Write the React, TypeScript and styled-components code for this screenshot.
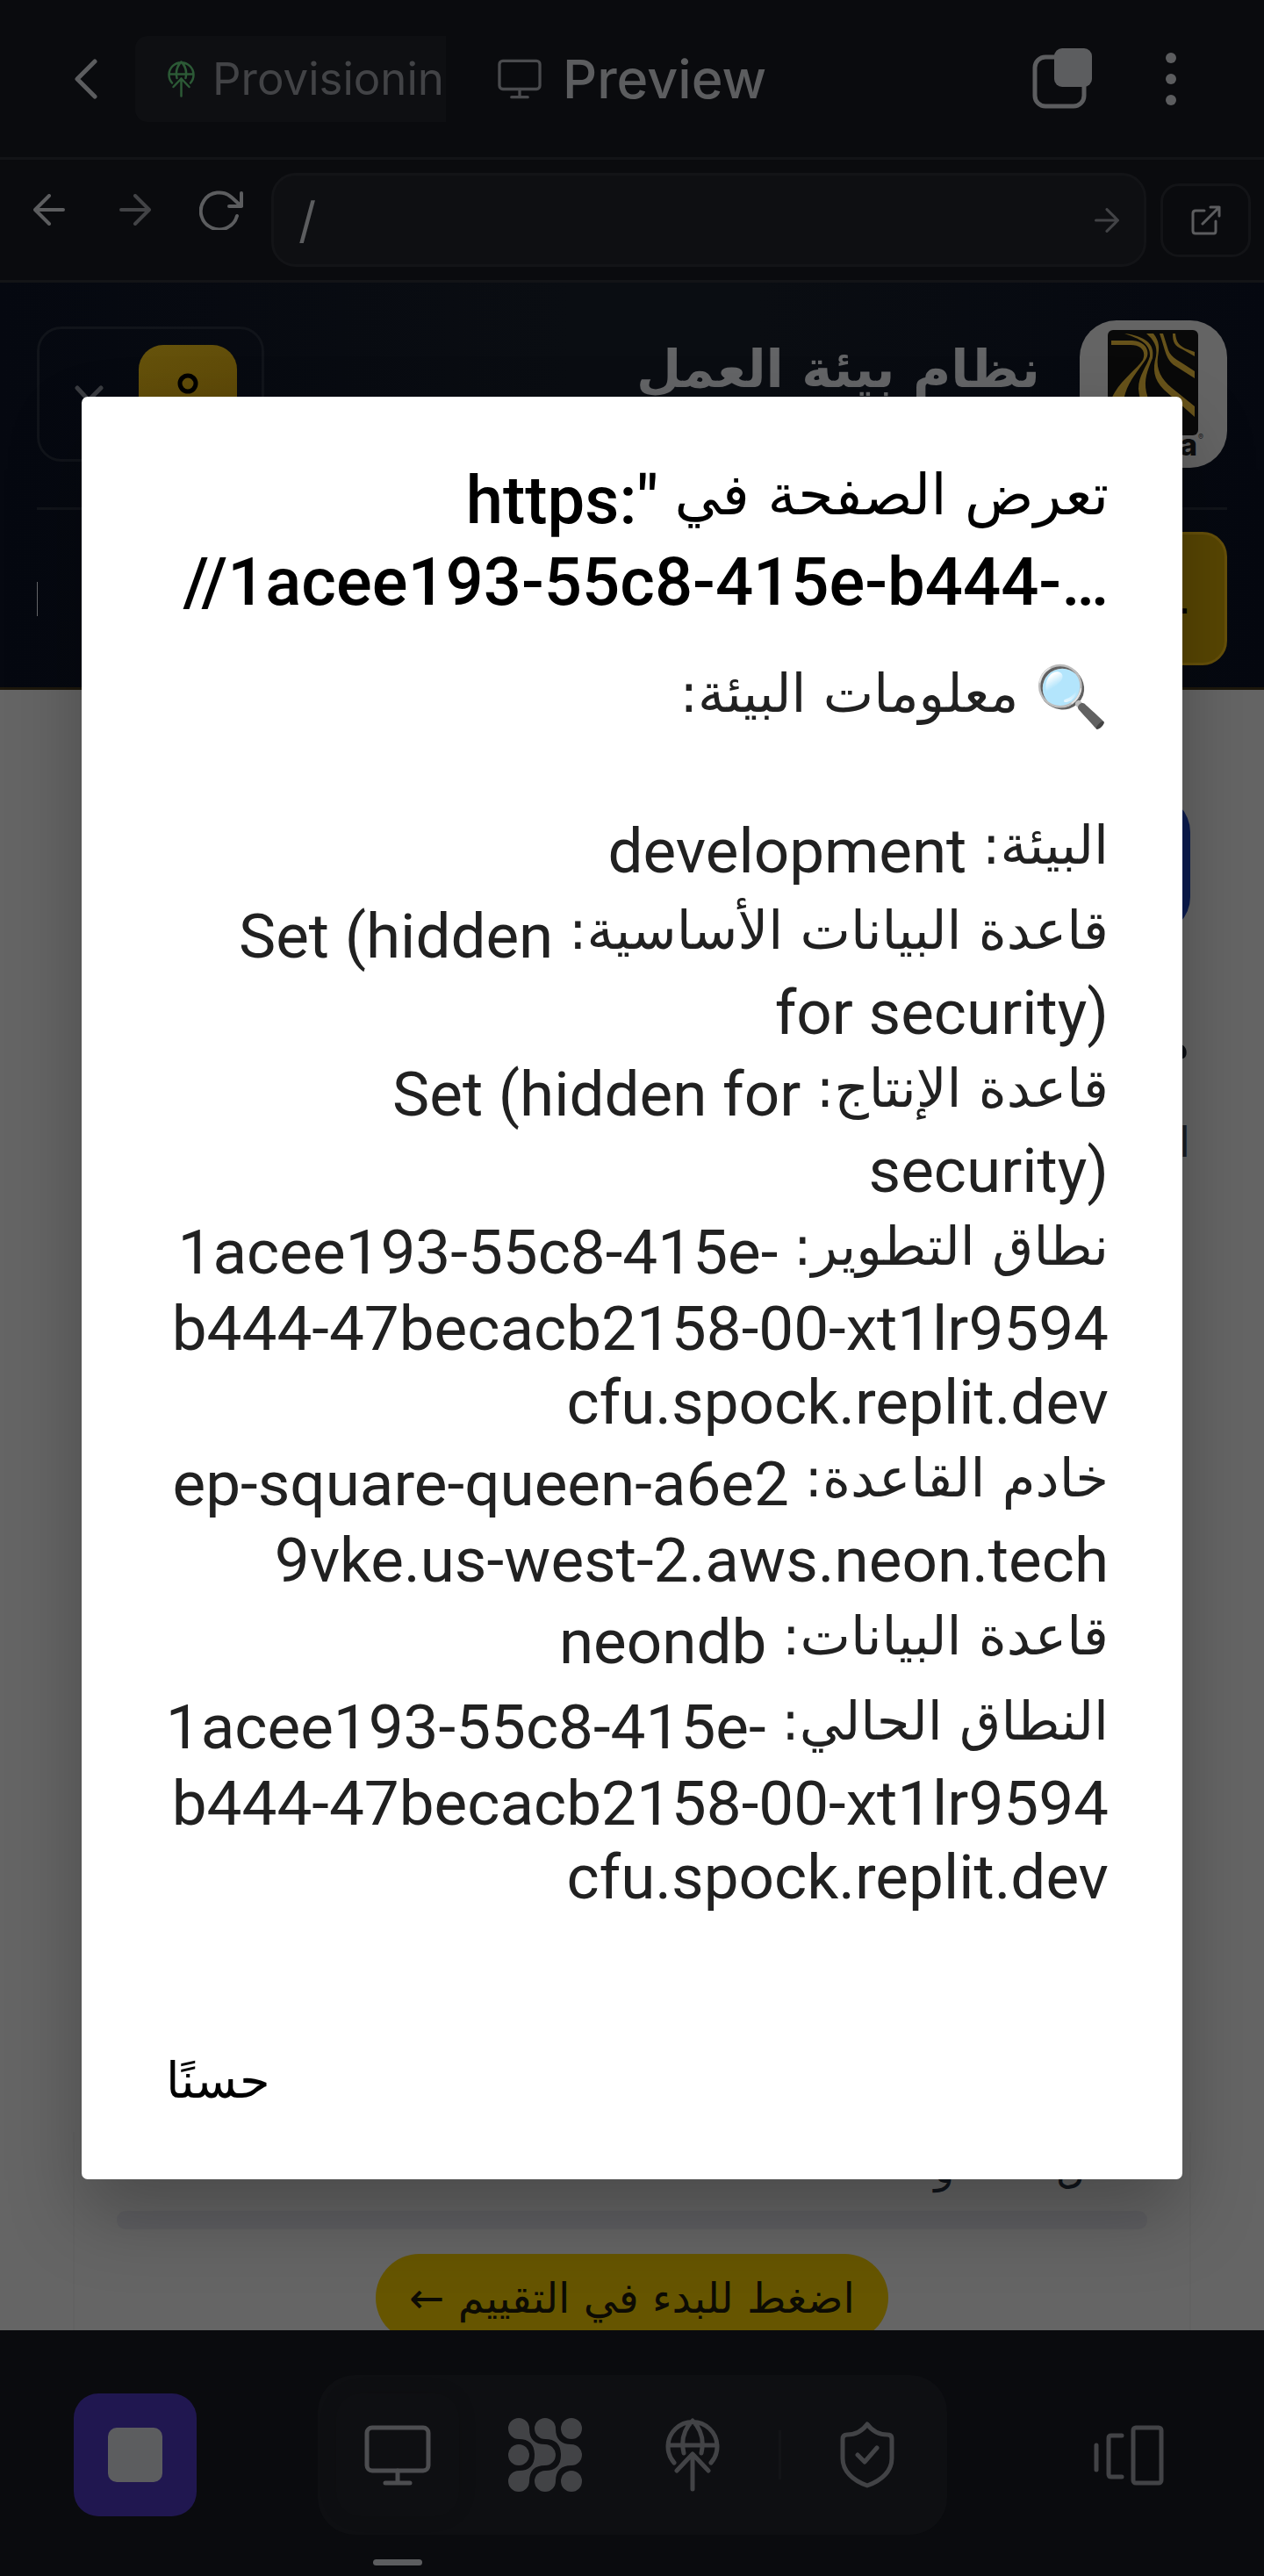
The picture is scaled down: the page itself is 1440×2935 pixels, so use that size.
import React from 'react';
import styled, { createGlobalStyle } from 'styled-components';

const color = {
  chrome: '#0a0b0e',
  raised: '#0e0f12',
  line: '#131417',
  text: '#5c5d5f',
  muted: '#424346',
};

const uiFont = "Inter, 'DejaVu Sans', sans-serif";
const arabicFont = "'DejaVu Sans', sans-serif";

const GlobalStyle = createGlobalStyle`
  *, *::before, *::after { box-sizing: border-box; }
  body { margin: 0; background: ${color.chrome}; font-family: ${uiFont}; }
  button, input { font: inherit; color: inherit; background: none; border: 0; padding: 0; margin: 0; }
  button { cursor: pointer; }
  svg { display: block; flex: none; }
`;

const Page = styled.div`
  display: flex;
  flex-direction: column;
  height: 100vh;
  min-height: 2400px;
  overflow: hidden;
  color: ${color.text};
`;

/* ---------- top bar ---------- */

const TopBar = styled.header`
  display: flex;
  align-items: center;
  flex: none;
  height: 182px;
  padding: 0 50px 0 70px;
  border-bottom: 3px solid ${color.line};
`;

const IconButton = styled.button<{ $width: number; $muted?: boolean }>`
  display: flex;
  align-items: center;
  justify-content: center;
  flex: none;
  width: ${(p) => p.$width}px;
  height: 84px;
  color: ${(p) => (p.$muted ? color.muted : color.text)};
`;

const Tabs = styled.nav`
  display: flex;
  align-items: center;
  flex: 1;
  gap: 59px;
  min-width: 0;
  margin-left: 28px;
`;

const BackgroundTab = styled.button`
  display: flex;
  align-items: center;
  flex: none;
  gap: 20px;
  width: 354px;
  height: 98px;
  padding-left: 37px;
  border-radius: 14px 0 0 14px;
  background: ${color.raised};
  color: ${color.muted};
  font-size: 51px;
  white-space: nowrap;

  svg { color: #2c5a36; }
`;

const CurrentTab = styled.button`
  display: flex;
  align-items: center;
  gap: 24px;
  font-size: 61px;
  font-weight: 500;

  svg { color: #4a4b4e; }
`;

const BarActions = styled.div`
  display: flex;
  gap: 12px;
`;

/* ---------- address bar ---------- */

const AddressBar = styled.div`
  display: flex;
  flex: none;
  height: 140px;
  padding: 15px 15px 0 7px;
  border-bottom: 3px solid ${color.line};
`;

const AddressForm = styled.form`
  display: flex;
  align-items: center;
  flex: 1;
  min-width: 0;
  height: 107px;
  margin: 0 16px 0 8px;
  padding: 0 28px;
  border: 3px solid ${color.line};
  border-radius: 28px;
  background: ${color.raised};
`;

const AddressInput = styled.input`
  flex: 1;
  min-width: 0;
  font-size: 56px;
  outline: none;
`;

const OpenButton = styled(IconButton)`
  align-self: flex-start;
  margin-top: 12px;
  border: 3px solid ${color.line};
  border-radius: 21px;
`;

/* ---------- previewed site ---------- */

const Preview = styled.main`
  display: flex;
  flex-direction: column;
  flex: 1;
  min-height: 0;
  overflow: hidden;
  background: #656565;
  font-family: ${arabicFont};
`;

const SiteHeader = styled.header`
  flex: none;
  padding: 43px 42px 25px;
  border-bottom: 3px solid #1d180c;
  background: linear-gradient(90deg, #050810, #0a0d12 45%, #0a0d12 60%, #050810);
`;

const SiteRow = styled.div`
  display: flex;
  align-items: center;
  gap: 45px;
  height: 168px;
`;

const LogoTile = styled.div`
  flex: none;
  width: 168px;
  height: 168px;
  overflow: hidden;
  border-radius: 42px;
  background: #646464;
`;

const SiteTitle = styled.h1`
  flex: 1;
  align-self: flex-start;
  margin: 0;
  padding-top: 14px;
  color: #636466;
  font-size: 59px;
  line-height: 84px;
  white-space: nowrap;
`;

const Profile = styled.button`
  display: flex;
  align-items: center;
  justify-content: space-between;
  flex: none;
  width: 259px;
  height: 154px;
  padding: 0 28px 0 40px;
  border: 3px solid #11141a;
  border-radius: 28px;
  direction: ltr;
`;

const Avatar = styled.span`
  display: flex;
  align-items: center;
  justify-content: center;
  width: 112px;
  height: 112px;
  border-radius: 28px;
  background: linear-gradient(160deg, #66530b, #584206);
  color: #000;
`;

const SiteNav = styled.nav`
  display: flex;
  align-items: center;
  justify-content: space-between;
  margin-top: 45px;
  padding-top: 25px;
  border-top: 3px solid #11141a;
`;

const NavItem = styled.button`
  width: 336px;
  height: 152px;
  padding: 0 38px;
  border: 3px solid #66500a;
  border-radius: 28px;
  background: #584603;
  color: #000;
  font-size: 47px;
  text-align: right;
`;

const NavEdge = styled.span`
  width: 1px;
  height: 39px;
  background: #66676a;
`;

const Section = styled.section`
  display: flex;
  flex-direction: column;
  align-items: flex-start;
  margin: 120px 84px 0;
  color: #0b0e13;
`;

const SectionBadge = styled.div`
  width: 158px;
  height: 158px;
  border-radius: 42px;
  background: #0c1c50;
`;

const SectionTitle = styled.h2`
  margin: 84px 0 0;
  font-size: 59px;
  line-height: 84px;
`;

const SectionText = styled.p`
  margin: 28px 0 0;
  color: #1a1e25;
  font-size: 47px;
  line-height: 84px;
`;

const Card = styled.article`
  display: flex;
  flex-direction: column;
  align-items: center;
  margin: auto 83px -13px;
  padding: 0 48px;
  border: solid #626262;
  border-width: 0 2px;
`;

const CardLine = styled.p`
  display: flex;
  align-self: stretch;
  gap: 116px;
  margin: 0;
  padding: 0 70px 6px;
  color: #11151b;
  font-size: 47px;
  line-height: 84px;
`;

const Progress = styled.div`
  align-self: stretch;
  height: 21px;
  border-radius: 10px;
  background: #5f5f62;
`;

const StartButton = styled.button`
  height: 100px;
  margin-top: 28px;
  padding: 0 38px;
  border-radius: 50px;
  background: #665500;
  color: #0c0b04;
  font-size: 48px;
  white-space: nowrap;
`;

/* ---------- bottom dock ---------- */

const Dock = styled.footer`
  display: flex;
  align-items: center;
  justify-content: space-between;
  flex: none;
  height: 280px;
  padding: 4px 84px 0;
  background: ${color.chrome};
`;

const StopButton = styled.button`
  display: flex;
  align-items: center;
  justify-content: center;
  width: 140px;
  height: 140px;
  border-radius: 28px;
  background: #201750;
`;

const StopMark = styled.span`
  width: 62px;
  height: 62px;
  border-radius: 10px;
  background: ${color.text};
`;

const DockGroup = styled.nav`
  display: flex;
  align-items: center;
  gap: 28px;
  padding: 21px;
  border-radius: 42px;
  background: ${color.raised};
`;

const DockButton = styled.button<{ $active?: boolean }>`
  position: relative;
  display: flex;
  align-items: center;
  justify-content: center;
  width: 140px;
  height: 140px;
  border-radius: 28px;
  color: ${(p) => (p.$active ? '#4c4d50' : color.muted)};
  box-shadow: ${(p) => (p.$active ? '0 0 20px rgba(0, 0, 0, 0.15)' : 'none')};

  &::after {
    content: ${(p) => (p.$active ? "''" : 'none')};
    position: absolute;
    top: 189px;
    width: 56px;
    height: 7px;
    border-radius: 4px;
    background: ${color.text};
  }
`;

const DockDivider = styled.span`
  width: 3px;
  height: 56px;
  background: ${color.line};
`;

/* ---------- alert dialog ---------- */

const Overlay = styled.div`
  position: fixed;
  inset: 0;
  display: flex;
  align-items: center;
  justify-content: center;
  padding: 0 93px;
`;

const Dialog = styled.div`
  width: 100%;
  padding: 72px 84px 70px;
  border-radius: 7px;
  background: #fff;
  color: #212121;
  box-shadow: 0 42px 84px rgba(0, 0, 0, 0.26);
  font-family: Roboto, 'DejaVu Sans', sans-serif;
`;

const DialogTitle = styled.h2`
  margin: 0;
  color: #000;
  font-size: 76px;
  font-weight: 500;
  line-height: 93px;
`;

const Message = styled.div`
  margin-top: 32px;
  font-size: 71px;
  line-height: 84px;
`;

type RowKind = 'tall' | 'mixed' | 'latin' | 'tail' | 'blank';
const rowSpace: Record<RowKind, number> = { tall: 13, mixed: 9, latin: 3, tail: 0, blank: 80 };

const Row = styled.p<{ $kind: RowKind }>`
  margin: 0;
  padding-top: ${(p) => rowSpace[p.$kind]}px;
  white-space: nowrap;
`;

const Arabic = styled.span<{ $size: number }>`
  font-family: ${arabicFont};
  font-size: ${(p) => p.$size}px;
  font-weight: 400;
  line-height: 1;
  vertical-align: 10px;
`;

const Emoji = styled(Arabic)`
  vertical-align: 4px;
`;

const Actions = styled.div`
  display: flex;
  justify-content: flex-end;
  margin-top: 148px;
`;

const OkButton = styled.button`
  padding: 0 12px;
  color: #000;
  font-family: ${arabicFont};
  font-size: 56px;
  line-height: 84px;
`;

/* ---------- icons ---------- */

type IconProps = { w: number; h: number; box: string; stroke?: number; children: React.ReactNode };

const Icon = ({ w, h, box, stroke = 5, children }: IconProps) => (
  <svg
    width={w}
    height={h}
    viewBox={box}
    fill="none"
    stroke="currentColor"
    strokeWidth={stroke}
    strokeLinecap="round"
    strokeLinejoin="round"
    aria-hidden="true"
  >
    {children}
  </svg>
);

const MonitorIcon = ({ w, h }: { w: number; h: number }) => (
  <Icon w={w} h={h} box="0 0 76 69">
    <rect x="3" y="3" width="70" height="49" rx="6" />
    <path d="M38 52V66M24 66H52" />
  </Icon>
);

const GlobeIcon = ({ w, h }: { w: number; h: number }) => (
  <Icon w={w} h={h} box="0 0 62 84">
    <path d="M10 51A28 28 0 1 1 52 51M3 31H59M31 3C20 14 18 27 21 40M31 3C42 14 44 27 41 40" />
    <path d="M13 60L31 41L49 60M31 41V81" />
  </Icon>
);

const ArrowIcon = ({ size, back, stroke = 4 }: { size: number; back?: boolean; stroke?: number }) => (
  <Icon w={size} h={size} box="0 0 36 36" stroke={stroke}>
    <path d={back ? 'M34 18H2M18 2L2 18L18 34' : 'M2 18H34M18 2L34 18L18 34'} />
  </Icon>
);

const Logo = () => (
  <svg width="168" height="168" viewBox="0 0 168 168" direction="ltr" aria-hidden="true">
    <rect x="32" y="11" width="103" height="120" rx="6" fill="#090909" />
    <g fill="#66521a">
      <path d="M36 23H60C76 24 81 36 75 45C66 58 57 68 52 83C48 97 46 109 47 124H36V90C44 70 64 57 72 45C76 35 70 28 58 28H36Z" />
      <path d="M51 15C74 18 86 26 83 43C77 58 73 67 76 82C79 96 88 109 97 120H84C74 106 68 92 67 78C67 62 77 52 80 41C81 27 69 21 51 15Z" />
      <path d="M76 15H84C91 24 91 31 89 42C87 56 93 67 105 77L131 98V110L96 79C84 67 83 55 87 41C89 29 84 22 76 15Z" />
      <path d="M91 15H95L101 34C104 43 114 46 131 58V66L109 52C98 45 98 35 91 15Z" />
      <path d="M106 15H109C110 25 113 28 120 32L131 36V41L117 33C108 29 106 25 106 15Z" />
    </g>
    <text x="114" y="154" fill="#0c0c0c" fontFamily="Inter, sans-serif" fontWeight="800" fontSize="34">a</text>
    <text x="135" y="136" fill="#202020" fontFamily="Inter, sans-serif" fontSize="9">®</text>
  </svg>
);

/* ---------- data ---------- */

type MessageRow = { kind: RowKind; label?: string; value?: string; emoji?: string };

const host = ['b444-47becacb2158-00-xt1lr9594', 'cfu.spock.replit.dev'];

const rows: MessageRow[] = [
  { kind: 'tall', emoji: '🔍', label: 'معلومات البيئة:' },
  { kind: 'blank' },
  { kind: 'mixed', label: 'البيئة:', value: 'development' },
  { kind: 'tall', label: 'قاعدة البيانات الأساسية:', value: 'Set (hidden' },
  { kind: 'latin', value: 'for security)' },
  { kind: 'mixed', label: 'قاعدة الإنتاج:', value: 'Set (hidden for' },
  { kind: 'latin', value: 'security)' },
  { kind: 'mixed', label: 'نطاق التطوير:', value: '1acee193-55c8-415e-' },
  { kind: 'latin', value: host[0] },
  { kind: 'tail', value: host[1] },
  { kind: 'mixed', label: 'خادم القاعدة:', value: 'ep-square-queen-a6e2' },
  { kind: 'latin', value: '9vke.us-west-2.aws.neon.tech' },
  { kind: 'mixed', label: 'قاعدة البيانات:', value: 'neondb' },
  { kind: 'tall', label: 'النطاق الحالي:', value: '1acee193-55c8-415e-' },
  { kind: 'latin', value: host[0] },
  { kind: 'tail', value: host[1] },
];

export default function App() {
  return (
    <>
      <GlobalStyle />
      <Page>
        <TopBar>
          <IconButton $width={56} aria-label="Back">
            <Icon w={26} h={46} box="0 0 26 46">
              <path d="M23 3L3 23L23 43" />
            </Icon>
          </IconButton>
          <Tabs>
            <BackgroundTab>
              <GlobeIcon w={31} h={42} />
              Provisionin
            </BackgroundTab>
            <CurrentTab>
              <MonitorIcon w={50} h={46} />
              Preview
            </CurrentTab>
          </Tabs>
          <BarActions>
            <IconButton $width={112} aria-label="Tabs">
              <Icon w={68} h={69} box="0 0 68 69">
                <rect x="3" y="10" width="56" height="56" rx="12" />
                <rect x="25" y="0" width="43" height="44" rx="9" fill="currentColor" stroke="none" />
              </Icon>
            </IconButton>
            <IconButton $width={112} aria-label="More">
              <Icon w={12} h={62} box="0 0 12 62">
                <g fill="currentColor" stroke="none">
                  <circle cx="6" cy="7" r="6" />
                  <circle cx="6" cy="31" r="6" />
                  <circle cx="6" cy="55" r="6" />
                </g>
              </Icon>
            </IconButton>
          </BarActions>
        </TopBar>

        <AddressBar>
          <IconButton $width={98} aria-label="Previous page"><ArrowIcon size={36} back /></IconButton>
          <IconButton $width={98} $muted aria-label="Next page"><ArrowIcon size={36} /></IconButton>
          <IconButton $width={98} aria-label="Reload">
            <Icon w={50} h={46} box="0 0 50 46" stroke={4}>
              <path d="M43 30A21 21 0 1 1 37 9L48 19M48 4V19H34" />
            </Icon>
          </IconButton>
          <AddressForm onSubmit={(e) => e.preventDefault()}>
            <AddressInput aria-label="Path" defaultValue="/" />
            <IconButton $width={28} $muted aria-label="Go"><ArrowIcon size={28} /></IconButton>
          </AddressForm>
          <OpenButton $width={103} aria-label="Open in new tab">
            <Icon w={34} h={34} box="0 0 34 34" stroke={3}>
              <path d="M15 6H5Q2 6 2 9V29Q2 32 5 32H26Q28 32 28 29V18M22 2H32V12M32 2L13 21" />
            </Icon>
          </OpenButton>
        </AddressBar>

        <Preview dir="rtl">
          <SiteHeader>
            <SiteRow>
              <LogoTile><Logo /></LogoTile>
              <SiteTitle>نظام بيئة العمل</SiteTitle>
              <Profile aria-label="Account">
                <Icon w={33} h={20} box="0 0 33 20">
                  <path d="M3 3L16 17L30 3" stroke="#3a3c41" />
                </Icon>
                <Avatar>
                  <Icon w={56} h={56} box="0 0 56 56">
                    <circle cx="28" cy="16" r="9" />
                    <path d="M10 50C10 30 46 30 46 50" />
                  </Icon>
                </Avatar>
              </Profile>
            </SiteRow>
            <SiteNav>
              <NavItem>.</NavItem>
              <NavEdge />
            </SiteNav>
          </SiteHeader>
          <Section>
            <SectionBadge />
            <SectionTitle>م</SectionTitle>
            <SectionText>ا</SectionText>
          </Section>
          <Card>
            <CardLine>
              <span>ل</span>
              <span>و</span>
            </CardLine>
            <Progress />
            <StartButton>اضغط للبدء في التقييم ←</StartButton>
          </Card>
        </Preview>

        <Dock>
          <StopButton aria-label="Stop"><StopMark /></StopButton>
          <DockGroup>
            <DockButton $active aria-label="Preview"><MonitorIcon w={76} h={69} /></DockButton>
            <DockButton aria-label="Agent">
              <Icon w={84} h={84} box="0 0 84 84">
                <g fill="currentColor" stroke="none">
                  <circle cx="12" cy="42" r="12" />
                  <circle cx="72" cy="12" r="12" />
                  <circle cx="72" cy="72" r="12" />
                  {[0, 30].map((x) => (
                    <path
                      key={x}
                      transform={`translate(${x} 0)`}
                      d="M24 12C24 24 30 30 42 30A12 12 0 0 1 42 54C30 54 24 60 24 72A12 12 0 1 1 12 60C24 60 30 54 30 42C30 30 24 24 12 24A12 12 0 1 1 24 12Z"
                    />
                  ))}
                </g>
              </Icon>
            </DockButton>
            <DockButton aria-label="Deploy"><GlobeIcon w={62} h={84} /></DockButton>
            <DockDivider />
            <DockButton aria-label="Security">
              <Icon w={62} h={76} box="0 0 62 76">
                <path d="M31 3C36 10 44 15 54 15Q59 15 59 20V42C59 56 48 67 31 73C14 67 3 56 3 42V20Q3 15 8 15C18 15 26 10 31 3Z" />
                <path d="M20 38L28 46L42 30" />
              </Icon>
            </DockButton>
          </DockGroup>
          <DockButton aria-label="Switch panel">
            <Icon w={80} h={69} box="0 0 80 69">
              <path d="M3 23V51M32 12H20Q17 12 17 15V56Q17 59 20 59H32" />
              <rect x="45" y="3" width="32" height="63" rx="3" />
            </Icon>
          </DockButton>
        </Dock>
      </Page>

      <Overlay dir="rtl">
        <Dialog role="alertdialog" aria-modal="true" aria-labelledby="alert-title" aria-describedby="alert-text">
          <DialogTitle id="alert-title">
            <Row as="span" $kind="tail">
              <Arabic $size={65}>تعرض الصفحة في</Arabic> "<bdi dir="ltr">https:</bdi>
            </Row>
            <br />
            <bdi dir="ltr">//1acee193-55c8-415e-b444-…</bdi>
          </DialogTitle>
          <Message id="alert-text">
            {rows.map((row, i) => (
              <Row key={i} $kind={row.kind}>
                {row.emoji && <><Emoji $size={68}>{row.emoji}</Emoji> </>}
                {row.label && <><Arabic $size={61}>{row.label}</Arabic> </>}
                {row.value && <bdi dir="ltr">{row.value}</bdi>}
              </Row>
            ))}
          </Message>
          <Actions>
            <OkButton>حسنًا</OkButton>
          </Actions>
        </Dialog>
      </Overlay>
    </>
  );
}
